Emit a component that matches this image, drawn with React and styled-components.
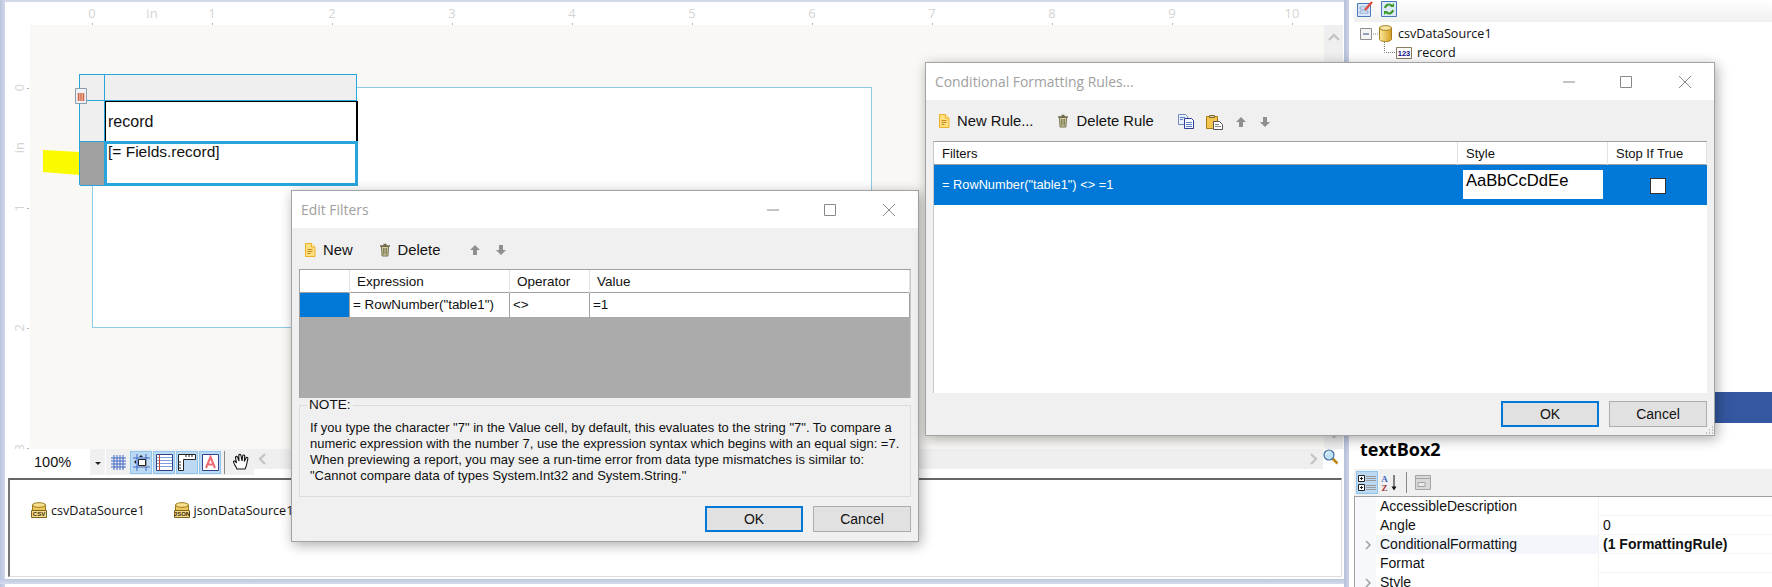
import React from "react";
import styled, { createGlobalStyle } from "styled-components";

const Global = createGlobalStyle`
  html, body { margin: 0; padding: 0; background: #fff; overflow: hidden; }
  #root { width: 1772px; height: 587px; }
  * { box-sizing: border-box; }
`;

const SANS = `"Liberation Sans", Arial, sans-serif`;
const UI = `"Open Sans", "Liberation Sans", sans-serif`;

const Desktop = styled.div`
  position: relative;
  display: flex;
  width: 1772px;
  height: 587px;
  overflow: hidden;
  background: #fff;
  font-family: ${SANS};
  color: #111;
`;
const FrameLeft = styled.div`
  width: 5px;
  background: linear-gradient(90deg, #b9c4de, #cfd8ea);
`;
const Designer = styled.div`
  width: 1339px;
  display: flex;
  flex-direction: column;
  border-top: 2px solid #d3daec;
`;
const DesignArea = styled.div`
  display: grid;
  grid-template-columns: 25px 1fr;
  grid-template-rows: 23px 1fr;
  height: 447px;
`;
const RulerCorner = styled.div`
  background: #fff;
`;
const RulerTop = styled.div`
  display: flex;
  padding-left: 32px;
  background: #fff;
  overflow: hidden;
`;
const RulerLeft = styled.div`
  display: flex;
  flex-direction: column;
  padding-top: 33px;
  background: #fff;
  overflow: hidden;
`;
const HMark = styled.div`
  position: relative;
  flex: 0 0 60px;
  height: 23px;
  text-align: center;
  font: 13px/23px ${UI};
  color: #d4d4d4;
  &::after {
    content: "";
    display: ${(p) => (p.$tick ? "block" : "none")};
    position: absolute;
    left: 30px;
    bottom: 0;
    width: 1px;
    height: 2px;
    background: #b5b5b5;
  }
`;
const VMark = styled.div`
  position: relative;
  flex: 0 0 60px;
  width: 25px;
  display: flex;
  align-items: center;
  justify-content: center;
  &::after {
    content: "";
    display: ${(p) => (p.$tick ? "block" : "none")};
    position: absolute;
    right: 1px;
    top: 30px;
    width: 2px;
    height: 1px;
    background: #b5b5b5;
  }
`;
const VLabel = styled.span`
  writing-mode: vertical-rl;
  transform: rotate(180deg);
  font: 13px/1 ${UI};
  color: #d4d4d4;
  padding-right: 3px;
`;
const SurfaceRow = styled.div`
  display: flex;
  min-height: 0;
`;
const Surface = styled.div`
  position: relative;
  flex: 1;
  background: #f9f8f4;
  overflow: hidden;
`;
const VScroll = styled.div`
  width: 21px;
  border-right: 1px solid #fff;
  border-left: 1px solid #f8f8f8;
  background: #efefef;
  display: flex;
  flex-direction: column;
  justify-content: space-between;
  align-items: center;
  padding: 6px 0 8px;
`;
const Page = styled.div`
  position: absolute;
  left: 62px;
  top: 62px;
  width: 780px;
  height: 241px;
  background: #fff;
  border: 1px solid #8ecae8;
`;
const Marker = styled.svg`
  position: absolute;
  left: 13px;
  top: 125px;
`;
const ReportTable = styled.div`
  position: absolute;
  left: 49px;
  top: 49px;
  width: 278px;
  height: 111px;
  display: grid;
  grid-template-columns: 25px 1fr;
  grid-template-rows: 26px 41px 44px;
  border-left: 1px solid #29a5dd;
  border-top: 1px solid #29a5dd;
`;
const Handle = styled.div`
  background: ${(p) => (p.$active ? "#a0a0a0" : "#efefef")};
  border-bottom: 1px solid #29a5dd;
  border-right: 1px solid #29a5dd;
`;
const HeaderCell = styled.div`
  background: #efefef;
  border-right: 1px solid #29a5dd;
  border-bottom: 1px solid #29a5dd;
`;
const LabelCell = styled.div`
  position: relative;
  background: #fff;
  border: solid #000;
  border-width: 1px 2px 0 1px;
  margin-right: -1px;
  font: 16px/19px ${SANS};
  padding: 10px 0 0 2px;
`;
const DataCell = styled.div`
  position: relative;
  background: #fff;
  border: 3px solid #29a5dd;
  margin: -1px -1px 0 -1px;
  font: 15.5px/16px ${SANS};
  padding: 0 0 0 1px;
`;
const TableGrip = styled.svg`
  position: absolute;
  left: 45px;
  top: 63px;
`;
const ViewBar = styled.div`
  display: flex;
  height: 26px;
  padding-left: 25px;
  background: #fff;
`;
const ZoomBox = styled.div`
  width: 60px;
  padding-left: 4px;
  font: 14.5px/26px ${SANS};
`;
const ZoomArrow = styled.div`
  width: 15px;
  background: #f0f0f0;
  display: flex;
  align-items: center;
  justify-content: center;
  margin-right: 1px;
`;
const Caret = styled.div`
  width: 0;
  height: 0;
  margin-top: 2px;
  border-left: 3px solid transparent;
  border-right: 3px solid transparent;
  border-top: 3px solid #222;
`;
const ToolStrip = styled.div`
  width: 148px;
  background: #f0f0f0;
  display: flex;
  align-items: center;
  padding-left: 1px;
  gap: 1px;
`;
const PlainTool = styled.div`
  width: 22px;
  height: 23px;
  display: flex;
  align-items: center;
  justify-content: center;
`;
const ActiveTool = styled(PlainTool)`
  background: #bcd9f4;
  border: 1px solid #90c5ee;
`;
const ToolSep = styled.div`
  width: 1px;
  height: 23px;
  background: #8a8a8a;
  margin: 0 6px 0 2px;
`;
const HScroll = styled.div`
  flex: 1;
  display: flex;
  flex-direction: column;
`;
const HTrack = styled.div`
  height: 20px;
  background: #efefef;
  display: flex;
  align-items: center;
  justify-content: space-between;
  padding: 0 4px 0 2px;
`;
const LensCell = styled.div`
  width: 21px;
  margin-left: -1px;
  background: #fff;
`;
const Tray = styled.div`
  height: 99px;
  margin: 3px 2px 0 3px;
  border-top: 2px solid #666;
  border-left: 2px solid #777;
  border-right: 1px solid #ddd;
  border-bottom: 1px solid #ddd;
  background: #fff;
  display: flex;
  padding: 22px 0 0 21px;
`;
const TrayItem = styled.div`
  display: flex;
  align-items: flex-start;
  gap: 4px;
  margin-right: 29px;
  font: 12.6px/18px ${UI};
  color: #111;
  height: 18px;
`;
const BottomFrame = styled.div`
  height: 5px;
  margin: 2px -2px 0 -5px;
  background: linear-gradient(180deg, #bcc7df, #d6dced);
`;
const Splitter = styled.div`
  width: 5px;
  background: linear-gradient(90deg, #b5c1dc, #c8d1e6);
`;
const Inspector = styled.div`
  flex: 1;
  display: flex;
  flex-direction: column;
  min-width: 0;
  height: 587px;
  overflow: hidden;
  background: #fff;
`;
const ExplorerBar = styled.div`
  flex: 0 0 22px;
  margin-left: 5px;
  background: linear-gradient(180deg, #fff, #f0f0f0);
  display: flex;
  gap: 8px;
  padding: 1px 0 0 3px;
`;
const Tree = styled.div`
  flex: 0 0 370px;
  padding: 2px 0 0 11px;
`;
const TreeRow = styled.div`
  display: flex;
  align-items: center;
  height: 19px;
  padding-left: ${(p) => p.$indent}px;
  font: 12.6px/19px ${UI};
`;
const TreeLabel = styled.span`
  margin-left: ${(p) => p.$gap}px;
`;
const BlueBar = styled.div`
  flex: 0 0 31px;
  background: #3357a0;
`;
const InspectorTitle = styled.div`
  flex: 0 0 46px;
  min-height: 0;
  padding: 6px 0 0 11px;
  font: bold 18px/40px "Open Sans", sans-serif;
  color: #000;
`;
const PropBar = styled.div`
  flex: 0 0 27px;
  margin-left: 5px;
  background: #f0f0f0;
  display: flex;
  align-items: center;
  padding-left: 2px;
  gap: 2px;
`;
const PropSep = styled.div`
  width: 1px;
  height: 21px;
  background: #8a8a8a;
  margin: 0 6px;
`;
const PropGrid = styled.div`
  margin-left: 5px;
  border-top: 1px solid #a0a0a0;
  border-left: 1px solid #a0a0a0;
`;
const PropRow = styled.div`
  display: grid;
  grid-template-columns: 21px 223px 1fr;
  height: 19px;
  font: 14px/19px ${SANS};
  border-bottom: 1px solid #f4f4f4;
`;
const PropGutter = styled.div`
  background: #f6f8fc;
  display: flex;
  align-items: center;
  justify-content: center;
  padding-left: 6px;
`;
const PropName = styled.div`
  padding-left: 4px;
  background: ${(p) => (p.$hot ? "#f3f6fb" : "#fff")};
  border-right: 1px solid #f4f4f4;
`;
const PropValue = styled.div`
  padding-left: 4px;
  font-weight: ${(p) => (p.$bold ? 700 : 400)};
`;

const Dialog = styled.div`
  position: absolute;
  left: ${(p) => p.$x}px;
  top: ${(p) => p.$y}px;
  width: ${(p) => p.$w}px;
  height: ${(p) => p.$h}px;
  background: #f0f0f0;
  border: 1px solid #a3a3a3;
  display: flex;
  flex-direction: column;
  box-shadow: 2px 3px 12px rgba(0, 0, 0, 0.33);
`;
const TitleBar = styled.div`
  flex: 0 0 37px;
  display: flex;
  align-items: center;
  background: #fff;
`;
const DialogTitle = styled.div`
  flex: 1;
  padding-left: 9px;
  font: 13.9px/1 ${UI};
  color: #a0a0a0;
`;
const WinButton = styled.div`
  width: 58px;
  display: flex;
  justify-content: center;
  padding-right: ${(p) => p.$nudge || 0}px;
`;
const DialogBody = styled.div`
  flex: 1;
  display: flex;
  flex-direction: column;
  padding: 0 7px;
  min-height: 0;
`;
const Toolbar = styled.div`
  flex: 0 0 41px;
  display: flex;
  align-items: center;
  padding: ${(p) => p.$drop}px 0 0 5px;
  gap: ${(p) => p.$gap}px;
  font: 14.8px/1 ${SANS};
`;
const ToolAction = styled.div`
  display: flex;
  align-items: center;
  gap: 7px;
`;
const IconCluster = styled.div`
  display: flex;
  align-items: center;
  gap: ${(p) => p.$gap}px;
  margin-left: ${(p) => p.$lead}px;
`;
const FilterGrid = styled.div`
  flex: 0 0 129px;
  background: #ababab;
  border-top: 1px solid #a0a0a0;
  border-left: 1px solid #a0a0a0;
  border-right: 1px solid #c8c8c8;
`;
const GridRow = styled.div`
  display: grid;
  grid-template-columns: 50px 160px 80px 1fr;
  height: ${(p) => p.$h}px;
  background: #fff;
  border-bottom: 1px solid #a0a0a0;
`;
const GridHead = styled.div`
  font: 13.5px/24px ${SANS};
  padding-left: 7px;
  border-right: 1px solid #e3e3e3;
`;
const GridCell = styled.div`
  font: 13.4px/24px ${SANS};
  padding-left: 3px;
  border-right: 1px solid #a0a0a0;
  background: ${(p) => (p.$sel ? "#0078d7" : "#fff")};
`;
const NoteBox = styled.fieldset`
  flex: 0 0 100px;
  margin: -1px 0 0 0;
  padding: 7px 0 0 10px;
  min-width: 0;
  border: 1px solid #dcdcdc;
`;
const NoteLegend = styled.legend`
  margin-left: -3px;
  padding: 0 2px;
  font: 13.6px/16px ${SANS};
`;
const NoteLine = styled.div`
  font: 13px/16px ${SANS};
  white-space: nowrap;
`;
const ButtonRow = styled.div`
  display: flex;
  justify-content: flex-end;
  gap: 10px;
  padding-top: ${(p) => p.$top}px;
`;
const Btn = styled.div`
  width: 98px;
  height: 26px;
  background: #e1e1e1;
  border: ${(p) => (p.$primary ? "2px solid #0078d7" : "1px solid #adadad")};
  text-align: center;
  font: 14px/${(p) => (p.$primary ? 22 : 24)}px ${SANS};
`;
const RuleGrid = styled.div`
  flex: 0 0 252px;
  background: #fff;
  border-top: 1px solid #a0a0a0;
  border-left: 1px solid #c8c8c8;
`;
const RuleHead = styled.div`
  display: grid;
  grid-template-columns: 524px 150px 1fr;
  height: 23px;
  border-bottom: 1px solid #a0a0a0;
`;
const RuleHeadCell = styled.div`
  font: 13px/23px ${SANS};
  padding-left: 8px;
  border-right: 1px solid #e3e3e3;
`;
const RuleRow = styled.div`
  display: grid;
  grid-template-columns: 524px 150px 1fr;
  height: 40px;
  background: #0078d7;
  color: #fff;
`;
const RuleExpr = styled.div`
  font: 12.8px/40px ${SANS};
  padding-left: 8px;
`;
const StyleCell = styled.div`
  padding: 5px 5px 6px 5px;
`;
const StyleSample = styled.div`
  height: 29px;
  background: #fff;
  color: #000;
  font: 16.6px/21px ${SANS};
  padding-left: 3px;
`;
const CheckCell = styled.div`
  display: flex;
  align-items: center;
  justify-content: center;
  padding-top: 1px;
`;
const CheckBox = styled.div`
  width: 16px;
  height: 16px;
  background: #fff;
  border: 1px solid #333;
`;
const FootBar = styled.div`
  flex: 1;
`;
const Grip = styled.svg`
  position: absolute;
  right: 0;
  bottom: 0;
`;

const NewIcon = () => (
  <svg width="12" height="14" viewBox="0 0 12 14">
    <path d="M1.5.5h6l3.5 3.5v9.5H1.5z" fill="#ffdf80" stroke="#eeb02a" />
    <path d="M7.5.5V4H11" fill="#fff3c4" stroke="#eeb02a" />
    <path d="M3.5 6.5h5M3.5 8.5h5M3.5 10.5h3" stroke="#c68a1c" />
  </svg>
);
const TrashIcon = () => (
  <svg width="12" height="14" viewBox="0 0 12 14">
    <path d="M4.5 1.5h3M1 3h10" stroke="#6e6a4a" strokeWidth="1.4" />
    <path d="M2.5 3.5h7l-.6 9.5H3.1z" fill="#d6d2a6" stroke="#6e6a4a" />
    <path d="M4.6 5v6.5M6 5v6.5M7.4 5v6.5" stroke="#7f7b58" />
  </svg>
);
const Arrow = ({ down }) => (
  <svg width="12" height="12" viewBox="0 0 12 12">
    <path
      d={down ? "M4 1h4v5h3L6 11 1 6h3z" : "M4 11h4V6h3L6 1 1 6h3z"}
      fill="#8f8f8f"
    />
  </svg>
);
const CopyIcon = () => (
  <svg width="16" height="15" viewBox="0 0 16 15">
    <path d="M.5.5h7l2 2v8H.5z" fill="#e8f0fb" stroke="#6f8cc4" />
    <path d="M6.5 4.5h7l2 2v8h-9z" fill="#f4f8ff" stroke="#2f3f8f" />
    <path d="M2 3.5h5M2 5.5h3M8 8.5h6M8 10.5h6M8 12.5h6" stroke="#5f82c8" />
  </svg>
);
const PasteIcon = () => (
  <svg width="17" height="16" viewBox="0 0 17 16">
    <path d="M.5 2.5h11v12H.5z" fill="#f5c64e" stroke="#a87a16" />
    <path d="M3.5 3.5V1.5h5v2z" fill="#d8d2b0" stroke="#7a6a30" />
    <path d="M7.5 7.5h6l3 3v5h-9z" fill="#fff" stroke="#555" />
    <path d="M9 10.5h4M9 12.5h6" stroke="#888" />
  </svg>
);
const WinMin = () => (
  <svg width="14" height="14" viewBox="0 0 14 14">
    <path d="M1 7h12" stroke="#8a8a8a" />
  </svg>
);
const WinMax = () => (
  <svg width="14" height="14" viewBox="0 0 14 14">
    <path d="M1.5 1.5h11v11h-11z" fill="none" stroke="#8a8a8a" />
  </svg>
);
const WinClose = () => (
  <svg width="14" height="14" viewBox="0 0 14 14">
    <path d="M1 1l12 12M13 1L1 13" stroke="#8a8a8a" />
  </svg>
);
const Controls = () => (
  <>
    <WinButton><WinMin /></WinButton>
    <WinButton $nudge={2}><WinMax /></WinButton>
    <WinButton><WinClose /></WinButton>
  </>
);
const Chevron = ({ dir }) => {
  const d = {
    up: "M2 9l5-5 5 5",
    down: "M2 5l5 5 5-5",
    left: "M9 2L4 7l5 5",
    right: "M5 2l5 5-5 5",
  }[dir];
  return (
    <svg width="14" height="14" viewBox="0 0 14 14">
      <path d={d} fill="none" stroke="#c4c4c4" strokeWidth="2.4" />
    </svg>
  );
};
const GridTool = () => (
  <svg width="15" height="15" viewBox="0 0 15 15">
    <path d="M3 0v15M6 0v15M9 0v15M12 0v15M0 3h15M0 6h15M0 9h15M0 12h15" stroke="#3f66c4" />
  </svg>
);
const SnapTool = () => (
  <svg width="17" height="17" viewBox="0 0 17 17">
    <path d="M0 4h17M0 13h17M4 0v17M13 0v17" stroke="#3f66c4" />
    <path d="M5.5 5.5h7v6h-7z" fill="#fff" stroke="#222" />
    <path d="M7 12.5h6.5V7" fill="none" stroke="#999" />
    <path d="M8 1l2 2H6zM1 8l2 2V6z" fill="#222" />
  </svg>
);
const LinesTool = () => (
  <svg width="17" height="17" viewBox="0 0 17 17">
    <path d="M.5.5h16v16H.5z" fill="#fff" stroke="#33418a" />
    <path d="M1 3.5h15M1 6.5h15M1 9.5h15M1 12.5h15" stroke="#7ea0dc" />
    <path d="M3.5 1v15" stroke="#d0453a" />
  </svg>
);
const RulerTool = () => (
  <svg width="18" height="17" viewBox="0 0 18 17">
    <path d="M.5.5h17v5h-12v11h-5z" fill="#fff" stroke="#222" />
    <path d="M8 1v2M11 1v2M14 1v2M1 8h2M1 11h2M1 14h2" stroke="#222" />
  </svg>
);
const TextTool = () => (
  <svg width="17" height="17" viewBox="0 0 17 17">
    <path d="M.5.5h16v16H.5z" fill="#fff" stroke="#33418a" />
    <path d="M4 14L8.5 3 13 14M5.5 10.5h6" fill="none" stroke="#ef6a70" strokeWidth="2" />
  </svg>
);
const HandTool = () => (
  <svg width="18" height="18" viewBox="0 0 18 18">
    <path
      d="M5 16C4 13 1 10 1.500 8.500c.5-1 2-.5 3 1.500L3.500 4.500c0-1.500 1.800-1.500 2.200 0L7 8 6.800 2.500c0-1.500 2-1.500 2.200 0L10 8l.7-5c.3-1.400 2-1.200 2 .2L12.300 8.500l1.700-3.500c.6-1.200 2.200-.6 1.800.8L14.500 12c-.4 1.800-1 3-1.500 4z"
      fill="#fff"
      stroke="#111"
      strokeWidth="1.100"
    />
  </svg>
);
const Lens = () => (
  <svg width="16" height="16" viewBox="0 0 16 16">
    <path d="M9.500 9.500l5 5" stroke="#c08a1a" strokeWidth="2.600" />
    <circle cx="6" cy="6" r="5" fill="#bfe0f5" stroke="#3f6f9f" strokeWidth="1.200" />
    <path d="M3 6a3 3 0 0 1 3-3" fill="none" stroke="#fff" />
  </svg>
);
const DbIcon = ({ children }) => (
  <svg width="16" height="16" viewBox="0 0 16 16">
    <path d="M1.500 3v7h13V3" fill="#edc75a" stroke="#9a7a20" />
    <ellipse cx="8" cy="3" rx="6.500" ry="2.300" fill="#f8e08c" stroke="#9a7a20" />
    <path d="M.5 8.500h15v7H.5z" fill="#f5d98a" stroke="#7a6420" />
    <text x="8" y="14.300" textAnchor="middle" fontSize="6" fontWeight="700" fontFamily="Liberation Sans" fill="#3a2c08">
      {children}
    </text>
  </svg>
);
const Cylinder = () => (
  <svg width="13" height="17" viewBox="0 0 13 17">
    <defs>
      <linearGradient id="cyl" x1="0" x2="1">
        <stop offset="0" stopColor="#fbe9a0" />
        <stop offset="1" stopColor="#d69e1e" />
      </linearGradient>
    </defs>
    <path d="M.5 3v11c0 1.600 2.600 2.500 6 2.500s6-.9 6-2.500V3z" fill="url(#cyl)" stroke="#a67c1c" />
    <ellipse cx="6.500" cy="3" rx="6" ry="2.400" fill="#f7e5a6" stroke="#a67c1c" />
  </svg>
);
const TreeMinus = () => (
  <svg width="19" height="12" viewBox="0 0 19 12">
    <path d="M.5.500h11v11H.5z" fill="#f4f4f4" stroke="#8f8f8f" />
    <path d="M3 6h6" stroke="#2c4a86" />
    <path d="M13 6h5" stroke="#888" strokeDasharray="1 1" />
  </svg>
);
const TreeBranch = styled.svg`
  margin-top: -9px;
`;
const NumberIcon = () => (
  <svg width="16" height="12" viewBox="0 0 16 12">
    <path d="M.5.500h15v11H.5z" fill="#fff" stroke="#8a7a60" />
    <text x="8" y="8.800" textAnchor="middle" fontSize="7.500" fontWeight="700" fontFamily="Liberation Sans" fill="#101080">
      123
    </text>
  </svg>
);
const DesignMode = () => (
  <svg width="16" height="16" viewBox="0 0 16 16">
    <path d="M.5 2.500h13v13H.5z" fill="#d7e6f8" stroke="#4a78b8" />
    <path d="M3 6h8v2H3zM3 10h8v2H3z" fill="#fff" stroke="#4a78b8" strokeWidth=".6" />
    <path d="M8 9l7-8" stroke="#e2483a" strokeWidth="2.200" />
  </svg>
);
const RefreshTool = () => (
  <svg width="16" height="16" viewBox="0 0 16 16">
    <path d="M.5.500h15v15H.5z" fill="#dce9f8" stroke="#4a78b8" />
    <path d="M4 7a4 4 0 0 1 7-2M12 9a4 4 0 0 1-7 2" fill="none" stroke="#3f9a2c" strokeWidth="2" />
    <path d="M9 6h4V2zM7 10H3v4z" fill="#3f9a2c" />
  </svg>
);
const CategoryIcon = () => (
  <svg width="19" height="18" viewBox="0 0 19 18">
    <path d="M.5 1.500h6v6h-6zM.5 10.500h6v6h-6z" fill="#fff" stroke="#222" />
    <path d="M2 4.500h3M3.500 3v3M2 13.500h3M3.500 12v3" stroke="#222" />
    <path d="M8 2.500h10M8 4.500h10M8 6.500h10M8 11.500h10M8 13.500h10M8 15.500h10" stroke="#9a9a9a" />
  </svg>
);
const AzIcon = () => (
  <svg width="18" height="18" viewBox="0 0 18 18">
    <text x="4.500" y="8" textAnchor="middle" fontSize="9" fontWeight="700" fontFamily="Liberation Serif" fill="#3f66c4">A</text>
    <text x="4.500" y="17" textAnchor="middle" fontSize="9" fontWeight="700" fontFamily="Liberation Serif" fill="#a03a3a">Z</text>
    <path d="M14 1v14" stroke="#111" />
    <path d="M11.500 12.500h5L14 16.500z" fill="#111" />
  </svg>
);
const PagesIcon = () => (
  <svg width="16" height="15" viewBox="0 0 16 15">
    <path d="M.5.500h15v14H.5z" fill="#d8d8d8" stroke="#a5a5a5" />
    <path d="M.5 3.500h15M3 7.500h7v4H3z" fill="#e8e8e8" stroke="#a5a5a5" />
  </svg>
);

const hMarks = ["0", "in", "1", "", "2", "", "3", "", "4", "", "5", "", "6", "", "7", "", "8", "", "9", "", "10", ""];
const vMarks = ["0", "in", "1", "", "2", "", "3"];

const note = [
  `If you type the character "7" in the Value cell, by default, this evaluates to the string "7". To compare a`,
  `numeric expression with the number 7, use the expression syntax which begins with an equal sign: =7.`,
  `When previewing a report, you may see a run-time error from data type mismatches is similar to:`,
  `"Cannot compare data of types System.Int32 and System.String."`,
];

const props = [
  { name: "AccessibleDescription", value: "" },
  { name: "Angle", value: "0" },
  { name: "ConditionalFormatting", value: "(1 FormattingRule)", bold: true, hot: true, open: true },
  { name: "Format", value: "" },
  { name: "Style", value: "", open: true },
];

const PropChevron = () => (
  <svg width="7" height="10" viewBox="0 0 7 10">
    <path d="M1 1l4 4-4 4" fill="none" stroke="#a0a0a0" strokeWidth="1.500" />
  </svg>
);

export default function App() {
  return (
    <Desktop>
      <Global />
      <FrameLeft />
      <Designer>
        <DesignArea>
          <RulerCorner />
          <RulerTop>
            {hMarks.map((m, i) => (
              <HMark key={i} $tick={m !== "" && m !== "in"}>{m}</HMark>
            ))}
          </RulerTop>
          <RulerLeft>
            {vMarks.map((m, i) => (
              <VMark key={i} $tick={m !== "" && m !== "in"}>
                <VLabel>{m}</VLabel>
              </VMark>
            ))}
          </RulerLeft>
          <SurfaceRow>
            <Surface>
              <Page />
              <Marker width="37" height="25" viewBox="0 0 37 25">
                <path d="M0 0l37 2v23L0 22z" fill="#fbfb00" />
              </Marker>
              <ReportTable>
                <Handle />
                <HeaderCell />
                <Handle />
                <LabelCell>record</LabelCell>
                <Handle $active />
                <DataCell>[= Fields.record]</DataCell>
              </ReportTable>
              <TableGrip width="12" height="16" viewBox="0 0 12 16">
                <path d="M.5.500h11v15H.5z" fill="#eef1f6" stroke="#8f9cad" />
                <path d="M2.500 6h7M2.500 8h7M2.500 10h7M2.500 12h7M3.500 5v8M6 5v8M8.500 5v8" stroke="#d8623a" />
              </TableGrip>
            </Surface>
            <VScroll>
              <Chevron dir="up" />
              <Chevron dir="down" />
            </VScroll>
          </SurfaceRow>
        </DesignArea>
        <ViewBar>
          <ZoomBox>100%</ZoomBox>
          <ZoomArrow><Caret /></ZoomArrow>
          <ToolStrip>
            <PlainTool><GridTool /></PlainTool>
            <ActiveTool><SnapTool /></ActiveTool>
            <ActiveTool><LinesTool /></ActiveTool>
            <ActiveTool><RulerTool /></ActiveTool>
            <ActiveTool><TextTool /></ActiveTool>
            <ToolSep />
            <HandTool />
          </ToolStrip>
          <HScroll>
            <HTrack>
              <Chevron dir="left" />
              <Chevron dir="right" />
            </HTrack>
          </HScroll>
          <LensCell><Lens /></LensCell>
        </ViewBar>
        <Tray>
          <TrayItem><DbIcon>CSV</DbIcon>csvDataSource1</TrayItem>
          <TrayItem><DbIcon>JSON</DbIcon>jsonDataSource1</TrayItem>
        </Tray>
        <BottomFrame />
      </Designer>
      <Splitter />
      <Inspector>
        <ExplorerBar>
          <DesignMode />
          <RefreshTool />
        </ExplorerBar>
        <Tree>
          <TreeRow $indent={0}>
            <TreeMinus />
            <Cylinder />
            <TreeLabel $gap={6}>csvDataSource1</TreeLabel>
          </TreeRow>
          <TreeRow $indent={24}>
            <TreeBranch width="12" height="12" viewBox="0 0 12 12">
              <path d="M.5 0v10.500H12" fill="none" stroke="#777" strokeDasharray="1 1" />
            </TreeBranch>
            <NumberIcon />
            <TreeLabel $gap={5}>record</TreeLabel>
          </TreeRow>
        </Tree>
        <BlueBar />
        <InspectorTitle>textBox2</InspectorTitle>
        <PropBar>
          <ActiveTool><CategoryIcon /></ActiveTool>
          <AzIcon />
          <PropSep />
          <PagesIcon />
        </PropBar>
        <PropGrid>
          {props.map((p) => (
            <PropRow key={p.name}>
              <PropGutter>{p.open && <PropChevron />}</PropGutter>
              <PropName $hot={p.hot}>{p.name}</PropName>
              <PropValue $bold={p.bold}>{p.value}</PropValue>
            </PropRow>
          ))}
        </PropGrid>
      </Inspector>

      <Dialog $x={291} $y={190} $w={628} $h={352}>
        <TitleBar>
          <DialogTitle>Edit Filters</DialogTitle>
          <Controls />
        </TitleBar>
        <DialogBody>
          <Toolbar $gap={26} $drop={3}>
            <ToolAction><NewIcon />New</ToolAction>
            <ToolAction><TrashIcon />Delete</ToolAction>
            <IconCluster $gap={14} $lead={3}>
              <Arrow />
              <Arrow down />
            </IconCluster>
          </Toolbar>
          <FilterGrid>
            <GridRow $h={23}>
              <GridHead />
              <GridHead>Expression</GridHead>
              <GridHead>Operator</GridHead>
              <GridHead>Value</GridHead>
            </GridRow>
            <GridRow $h={24}>
              <GridCell $sel />
              <GridCell>= RowNumber("table1")</GridCell>
              <GridCell>&lt;&gt;</GridCell>
              <GridCell>=1</GridCell>
            </GridRow>
          </FilterGrid>
          <NoteBox>
            <NoteLegend>NOTE:</NoteLegend>
            {note.map((l) => (
              <NoteLine key={l}>{l}</NoteLine>
            ))}
          </NoteBox>
          <ButtonRow $top={9}>
            <Btn $primary>OK</Btn>
            <Btn>Cancel</Btn>
          </ButtonRow>
        </DialogBody>
      </Dialog>

      <Dialog $x={925} $y={62} $w={790} $h={374}>
        <TitleBar>
          <DialogTitle>Conditional Formatting Rules...</DialogTitle>
          <Controls />
        </TitleBar>
        <DialogBody>
          <Toolbar $gap={24} $drop={2}>
            <ToolAction><NewIcon />New Rule...</ToolAction>
            <ToolAction><TrashIcon />Delete Rule</ToolAction>
            <IconCluster $gap={12} $lead={0}>
              <CopyIcon />
              <PasteIcon />
              <Arrow />
              <Arrow down />
            </IconCluster>
          </Toolbar>
          <RuleGrid>
            <RuleHead>
              <RuleHeadCell>Filters</RuleHeadCell>
              <RuleHeadCell>Style</RuleHeadCell>
              <RuleHeadCell>Stop If True</RuleHeadCell>
            </RuleHead>
            <RuleRow>
              <RuleExpr>= RowNumber("table1") &lt;&gt; =1</RuleExpr>
              <StyleCell><StyleSample>AaBbCcDdEe</StyleSample></StyleCell>
              <CheckCell><CheckBox /></CheckCell>
            </RuleRow>
          </RuleGrid>
          <FootBar>
            <ButtonRow $top={8}>
              <Btn $primary>OK</Btn>
              <Btn>Cancel</Btn>
            </ButtonRow>
          </FootBar>
        </DialogBody>
        <Grip width="9" height="9" viewBox="0 0 9 9">
          <path d="M7 1h1M4 4h1M7 4h1M1 7h1M4 7h1M7 7h1" stroke="#b0b0b0" strokeWidth="1.500" />
        </Grip>
      </Dialog>
    </Desktop>
  );
}
